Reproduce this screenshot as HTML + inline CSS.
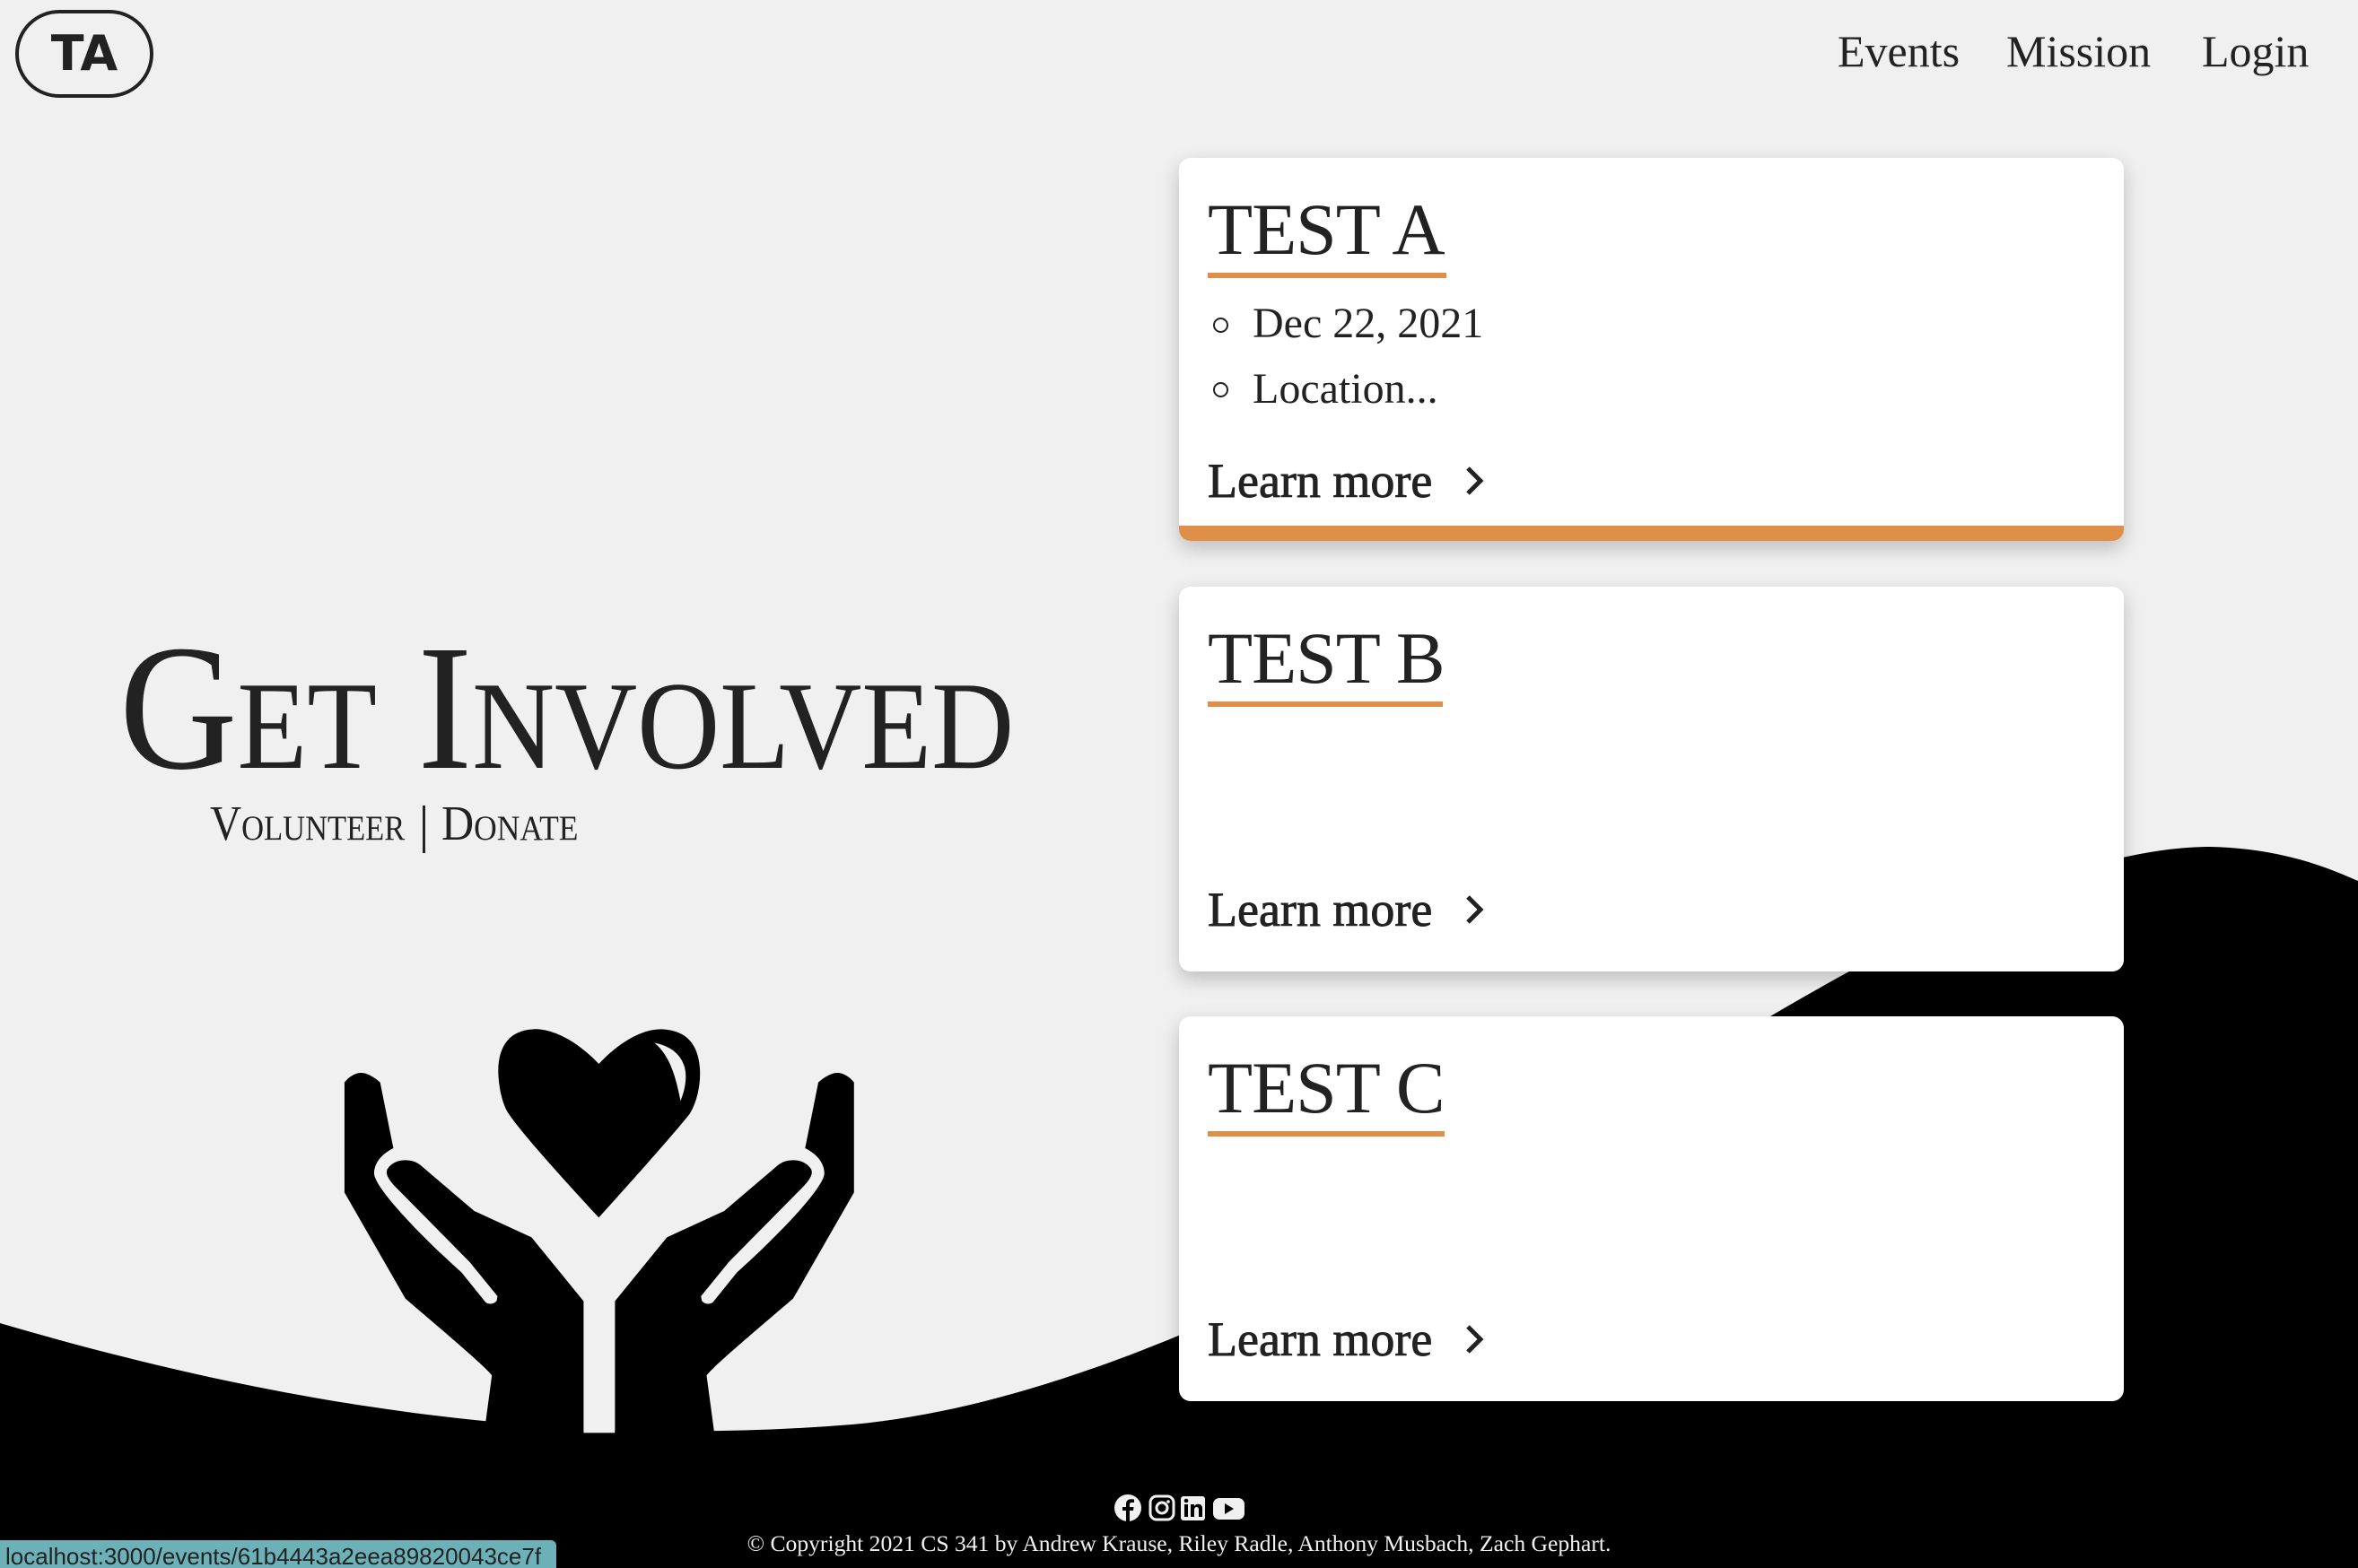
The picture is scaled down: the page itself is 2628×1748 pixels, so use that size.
<!DOCTYPE html>
<html><head><meta charset="utf-8"><style>
*{margin:0;padding:0;box-sizing:border-box}
html,body{width:2628px;height:1748px;overflow:hidden;background:#f0f0f0;font-family:"Liberation Serif",serif;color:#222}
.abs{position:absolute}
.logo{left:17px;top:11px;width:154px;height:98px;border:4px solid #222;border-radius:49px;font-family:"DejaVu Sans",sans-serif;font-weight:bold;font-size:54px;line-height:90px;text-align:center;color:#222}
.nav{top:22px;font-size:50px;line-height:70px;color:#222}
.card{left:1314px;width:1053px;background:#fff;border-radius:13px;box-shadow:0 8px 22px rgba(0,0,0,0.22);overflow:hidden}
.title{position:absolute;left:32px;top:30px;font-size:82px;line-height:100px;white-space:nowrap;letter-spacing:-1px}
.ul{position:absolute;left:32px;top:128px;height:6px;background:#df8f48}
.li{position:absolute;left:82px;font-size:48px;line-height:60px;white-space:nowrap}
.dot{position:absolute;left:38px;width:17px;height:17px;border:2.5px solid #222;border-radius:50%}
.lm{position:absolute;left:32px;font-size:54px;line-height:60px;white-space:nowrap;-webkit-text-stroke:0.9px #222}
.chev{position:absolute;left:312px;width:40px;height:40px}
</style></head><body>
<svg class="abs" style="left:0;top:0" width="2628" height="1748">
<path d="M0,1475 C350,1578 650,1612 950,1588 C1250,1560 1600,1360 1978,1130 C2200,1000 2350,944 2464,944 C2540,946 2590,965 2628,982 L2628,1748 L0,1748 Z" fill="#000"/>
</svg>
<svg class="abs" style="left:300px;top:1100px" width="700" height="520" viewBox="0 0 1568 1560" preserveAspectRatio="none">
<path d="M823,258 C760,170 700,140 660,142 C600,145 570,200 572,290 C574,350 585,400 598,425 C640,510 823,772 823,772 C823,772 1000,510 1050,425 C1070,380 1078,320 1075,270 C1070,190 1040,145 980,142 C930,140 870,190 823,258 Z" fill="#000"/>
<path d="M962,188 C1010,200 1040,240 1040,300 C1040,340 1030,370 1027,382 C1015,300 1000,230 962,188 Z" fill="#f0f0f0"/>
<g id="h"><path d="M188,320 C200,300 215,288 230,288 C245,288 265,305 277,320 L310,540 C280,560 262,590 262,625 C265,680 400,860 480,955 L540,1055 C548,1064 562,1062 568,1050 L570,1035 L500,920 L312,665 C296,640 290,625 295,610 C305,590 320,580 340,580 C355,580 368,586 377,596 L512,750 L655,838 L785,1052 L785,1560 L530,1560 L556,1300 C540,1270 420,1135 340,1043 L188,688 Z" fill="#000"/></g>
<use href="#h" transform="translate(1648,0) scale(-1,1)"/>
<rect x="785" y="1052" width="78" height="440" fill="#f0f0f0"/>
</svg>
<div class="abs logo">TA</div>
<div class="abs nav" style="left:2048px">Events</div>
<div class="abs nav" style="left:2236px">Mission</div>
<div class="abs nav" style="left:2454px">Login</div>

<div class="abs" style="left:133px;top:690px;font-size:200px;line-height:200px;font-variant:small-caps;white-space:nowrap;transform:scaleX(0.91);transform-origin:left top">Get Involved</div>
<div class="abs" style="left:234px;top:888px;font-size:55px;line-height:60px;font-variant:small-caps;white-space:nowrap;transform:scaleX(0.885);transform-origin:left top">Volunteer</div>
<div class="abs" style="left:471px;top:898px;width:3px;height:53px;background:#222"></div>
<div class="abs" style="left:492px;top:888px;font-size:55px;line-height:60px;font-variant:small-caps;white-space:nowrap;transform:scaleX(0.91);transform-origin:left top">Donate</div>

<div class="abs card" style="top:176px;height:427px">
 <div class="title">TEST A</div><div class="ul" style="width:266px"></div>
 <div class="dot" style="top:178px"></div><div class="li" style="top:155px">Dec 22, 2021</div>
 <div class="dot" style="top:250px"></div><div class="li" style="top:228px">Location...</div>
 <div class="lm" style="top:330px">Learn more</div>
 <svg class="chev" style="top:340px" viewBox="0 0 40 40"><path d="M10,6 L24,20 L10,34" fill="none" stroke="#222" stroke-width="5"/></svg>
 <div class="abs" style="left:0;bottom:0;width:100%;height:17px;background:#df8f48"></div>
</div>
<div class="abs card" style="top:654px;height:429px">
 <div class="title">TEST B</div><div class="ul" style="width:262px"></div>
 <div class="lm" style="top:330px">Learn more</div>
 <svg class="chev" style="top:340px" viewBox="0 0 40 40"><path d="M10,6 L24,20 L10,34" fill="none" stroke="#222" stroke-width="5"/></svg>
</div>
<div class="abs card" style="top:1133px;height:429px">
 <div class="title">TEST C</div><div class="ul" style="width:264px"></div>
 <div class="lm" style="top:330px">Learn more</div>
 <svg class="chev" style="top:340px" viewBox="0 0 40 40"><path d="M10,6 L24,20 L10,34" fill="none" stroke="#222" stroke-width="5"/></svg>
</div>

<svg class="abs" style="left:1240px;top:1665px" width="150" height="32" viewBox="0 0 150 32">
<circle cx="17" cy="16" r="15" fill="#f0f0f0"/>
<path d="M19,32 L19,19 L23,19 L23.5,15 L19,15 L19,12.5 C19,11 19.5,10 21.5,10 L24,10 L24,6.5 C23,6.4 22,6.3 20.5,6.3 C17,6.3 15,8.3 15,12 L15,15 L11,15 L11,19 L15,19 L15,32 Z" fill="#000"/>
<rect x="42" y="3" width="26" height="26" rx="7" fill="none" stroke="#f0f0f0" stroke-width="3"/>
<circle cx="55" cy="16" r="6" fill="none" stroke="#f0f0f0" stroke-width="3"/>
<circle cx="62" cy="9" r="1.8" fill="#f0f0f0"/>
<rect x="76" y="3" width="27" height="27" rx="3" fill="#f0f0f0"/>
<rect x="80" y="12" width="4" height="14" fill="#000"/><circle cx="82" cy="8" r="2.3" fill="#000"/>
<path d="M87,12 L91,12 L91,14 C92,12.5 93.5,11.7 95.5,11.7 C98.5,11.7 100,13.5 100,17 L100,26 L96,26 L96,18 C96,16 95.3,15 93.8,15 C92,15 91,16.2 91,18.5 L91,26 L87,26 Z" fill="#000"/>
<rect x="112" y="5" width="35" height="24" rx="7" fill="#f0f0f0"/>
<path d="M125,11 L135,17 L125,23 Z" fill="#000"/>
</svg>
<div class="abs" style="left:0;width:2628px;top:1704px;text-align:center;color:#f0f0f0;font-size:25.6px;line-height:34px">© Copyright 2021 CS 341 by Andrew Krause, Riley Radle, Anthony Musbach, Zach Gephart.</div>
<div class="abs" style="left:0;top:1717px;width:620px;height:31px;background:#6cb1b8;border-top-right-radius:6px;font-family:'Liberation Sans',sans-serif;font-size:26px;line-height:36px;padding-left:6px;color:#222;white-space:nowrap;overflow:hidden">localhost:3000/events/61b4443a2eea89820043ce7f</div>
</body></html>
